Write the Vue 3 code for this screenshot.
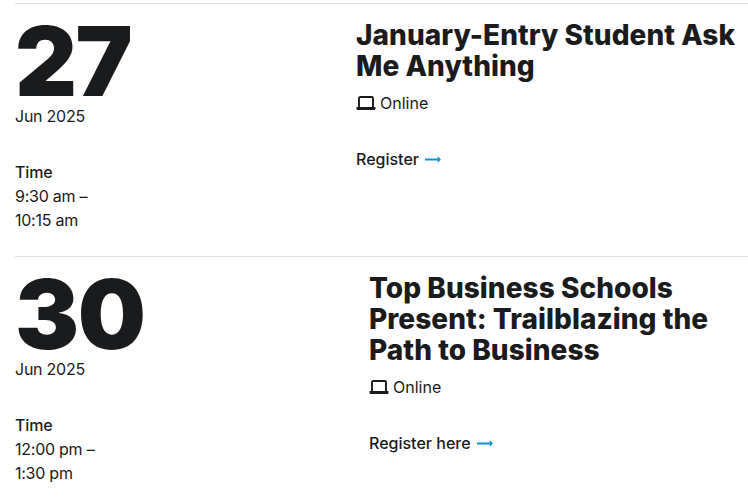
<script setup>
const events = [
  { day: '27', month: 'Jun 2025', start: '9:30 am –', end: '10:15 am', title: 'January-Entry Student Ask Me Anything', link: 'Register', left: 341 },
  { day: '30', month: 'Jun 2025', start: '12:00 pm –', end: '1:30 pm', title: 'Top Business Schools Present: Trailblazing the Path to Business', link: 'Register here', left: 354 },
]
</script>

<template>
  <main class="list">
    <article v-for="e in events" :key="e.day" class="event">
      <div class="when" :style="{ width: e.left + 'px' }">
        <div class="day">{{ e.day }}</div>
        <div class="month">{{ e.month }}</div>
        <div class="time-label">Time</div>
        <div class="time">{{ e.start }}</div>
        <div class="time">{{ e.end }}</div>
      </div>
      <div class="info">
        <h2 class="title">{{ e.title }}</h2>
        <div class="mode">
          <svg class="laptop" width="20" height="15" viewBox="0 0 20 15" fill="none">
            <path d="M3 12V2.200C3 1.500 3.500 1 4.200 1h11.600c.7 0 1.200.5 1.200 1.200V12" stroke="#1a1b1d" stroke-width="1.900" />
            <path d="M.5 11h19v1.700c0 .8-.6 1.300-1.300 1.300H1.800C1.100 14 .5 13.500.5 12.700z" fill="#1a1b1d" />
          </svg>
          <span>Online</span>
        </div>
        <a class="link" href="#" @click.prevent>
          <span>{{ e.link }}</span>
          <svg width="16" height="9" viewBox="0 0 16 9" fill="none">
            <path d="M0 4.500h14" stroke="#0a94d6" stroke-width="2" />
            <path d="M13 1.800 15.700 4.500 13 7.200z" fill="#0a94d6" stroke="#0a94d6" stroke-width=".6" />
          </svg>
        </a>
      </div>
    </article>
  </main>
</template>

<style scoped>
.list {
  width: 733px;
  margin-left: 15px;
  padding-top: 3px;
  font-family: Inter, "Liberation Sans", Arial, sans-serif;
  color: #1a1b1d;
  height: 494px;
  overflow: hidden;
}
.event {
  display: flex;
  border-top: 1px solid #dedede;
  height: 252px;
}
.when {
  flex: none;
}
.day {
  font-size: 96px;
  font-weight: 900;
  line-height: 78px;
  margin-top: 18px;
  letter-spacing: -1.5px;
}
.month {
  font-size: 16px;
  line-height: 24px;
  margin-top: 4px;
  letter-spacing: -0.25px;
}
.time-label {
  font-size: 16px;
  font-weight: 500;
  line-height: 24px;
  margin-top: 32px;
  letter-spacing: -0.15px;
}
.time {
  font-size: 16px;
  line-height: 24px;
  letter-spacing: -0.25px;
}
.info {
  flex: 1;
  min-width: 0;
  padding-top: 16px;
}
.title {
  margin: 0;
  font-size: 28px;
  font-weight: 800;
  line-height: 31px;
  letter-spacing: 0.05px;
}
.mode {
  display: flex;
  align-items: center;
  gap: 4px;
  font-size: 16px;
  line-height: 24px;
  margin-top: 9px;
}
.link {
  display: flex;
  align-items: center;
  gap: 6px;
  margin-top: 32px;
  font-size: 16px;
  font-weight: 500;
  line-height: 24px;
  color: #1a1b1d;
  text-decoration: none;
}
</style>
